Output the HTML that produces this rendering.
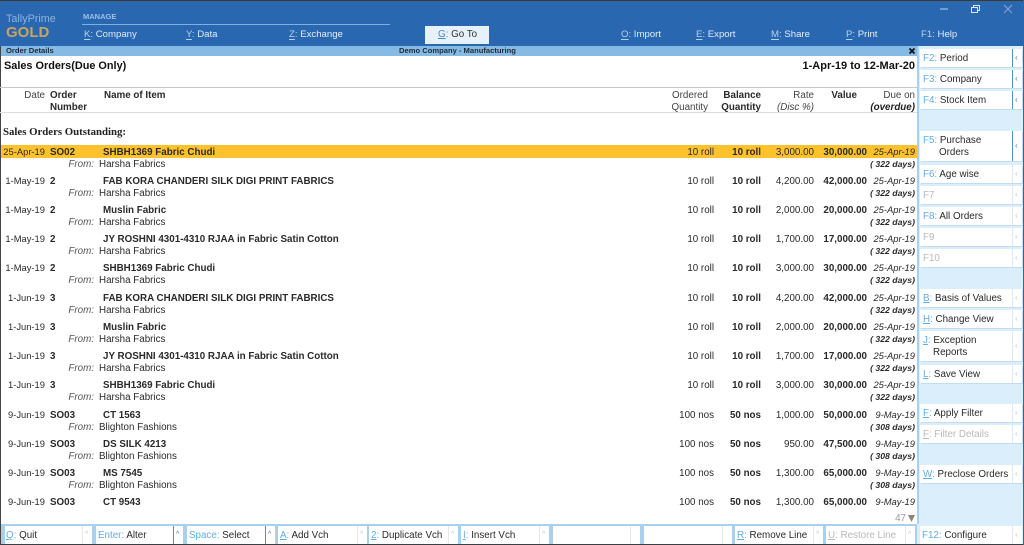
<!DOCTYPE html>
<html><head><meta charset="utf-8">
<style>
html,body{margin:0;padding:0}
body{width:1024px;height:545px;overflow:hidden;position:relative;background:#fff;font-family:"Liberation Sans",sans-serif;font-size:9.8px;color:#2a2a2a;filter:blur(.3px)}
.a,.a2{position:absolute}
.t{position:absolute;white-space:nowrap;line-height:12px}
.w{color:#e2edf8;font-size:9.6px}
.w i{font-style:normal;color:#b5d2ee}
.w u{text-decoration-thickness:1px;text-underline-offset:2px}
b{font-weight:bold}
.r{position:absolute;left:0;width:1024px;height:12px}
.r span{position:absolute;top:1px;white-space:nowrap;line-height:12px}
.d{right:979px;font-size:9.4px}.o{left:50px;font-weight:bold}.n{left:103px;font-weight:bold}
.r .d,.r .du{top:0}
.q{right:310px}.bq{right:263px;font-weight:bold}.rt{right:210px}.v{right:157px;font-weight:bold}.du{right:109px;font-style:italic;font-size:9.4px}
.f{right:930px;font-style:italic;color:#555}.s{left:99px}.ov{right:109px;font-weight:bold;font-style:italic;font-size:8.7px}
.r .ov{top:0}
.btn{position:absolute;background:#fff;box-shadow:1px 1px 0 #c3dcf0;height:18px;left:920px;width:102px}
.btn .l{position:absolute;left:3px;top:4px;line-height:12px;white-space:nowrap}
.btn .c{color:#62ace4}
.btn .g{color:#b9b9b9}
.btn .dv{position:absolute;left:92px;top:0;bottom:0;width:1px;background:#dfe8f0}
.btn.on .dv{background:#4f8ed0}
.btn .ar{position:absolute;left:95px;top:50%;margin-top:-6px;line-height:12px;font-size:8px;color:#c4c4c4}
.btn.on .ar{color:#3c78bd}
.bt{position:absolute;top:526px;height:18px;background:#fff}
.bt .l{position:absolute;left:2px;top:4px;line-height:12px;white-space:nowrap}
.bt .c{color:#62ace4;font-weight:normal}
.bt .g{color:#b9b9b9}
.bt .dv{position:absolute;top:0;bottom:0;width:1px;background:#e4e9ee}
.bt.on .dv{background:#4f8ed0}
.bt .ar{position:absolute;top:3px;font-size:7px;line-height:12px;color:#c4c4c4}
.bt.on .ar{color:#3c78bd}
</style></head><body>
<div class="a" style="left:0;top:0;width:1024px;height:46px;background:#2a67b1"></div>
<div class="a" style="left:0;top:0;width:1024px;height:1px;background:#3d3a30"></div>
<div class="t" style="left:6px;top:12px;font-size:10.8px;color:#8cb3dc;line-height:14px">TallyPrime</div>
<div class="t" style="left:6px;top:24px;font-size:15px;font-weight:bold;color:#c9a55c;line-height:18px">GOLD</div>
<div class="t" style="left:83px;top:11px;font-size:7.5px;font-weight:bold;color:#9cc0e6">MANAGE</div>
<div class="a" style="left:82px;top:24px;width:308px;height:1px;background:#7fb0e0"></div>
<div class="t w" style="left:84px;top:29px"><i><u>K</u>:</i> Company</div>
<div class="t w" style="left:186px;top:29px"><i><u>Y</u>:</i> Data</div>
<div class="t w" style="left:289px;top:29px"><i><u>Z</u>:</i> Exchange</div>
<div class="a" style="left:425px;top:26px;width:64px;height:18px;background:#e6f1fa"></div>
<div class="t" style="left:438px;top:29px;color:#333"><span style="color:#4a86c6"><u>G</u>:</span> Go To</div>
<div class="t w" style="left:621px;top:29px"><i><u>O</u>:</i> Import</div>
<div class="t w" style="left:696px;top:29px"><i><u>E</u>:</i> Export</div>
<div class="t w" style="left:771px;top:29px"><i><u>M</u>:</i> Share</div>
<div class="t w" style="left:846px;top:29px"><i><u>P</u>:</i> Print</div>
<div class="t w" style="left:921px;top:29px"><i>F1:</i> Help</div>
<svg class="a" style="left:930px;top:0" width="94" height="20" viewBox="0 0 94 20"><path d="M10 9h8" stroke="#b8cfe8" stroke-width="1"/><path d="M41.500 7.500h6v5h-6zM43.500 7.500v-2h6v5h-2" stroke="#dbe8f5" fill="none"/><path d="M74 5l8 8M82 5l-8 8" stroke="#86aad6" fill="none"/></svg>

<div class="a" style="left:0;top:46px;width:917px;height:10px;background:#85bae4"></div>
<div class="t" style="left:6px;top:45px;font-size:7.6px;font-weight:bold;color:#1e2a38">Order Details</div>
<div class="t" style="left:399px;top:45px;font-size:7.6px;font-weight:bold;color:#1e2a38">Demo Company - Manufacturing</div>
<svg class="a" style="left:908px;top:47px" width="8" height="8"><path d="M1.500 1.500l5 5M6.500 1.500l-5 5" stroke="#111" stroke-width="1.800"/></svg>
<div class="a" style="left:0;top:46px;width:1px;height:478px;background:#444"></div>

<div class="t" style="left:4px;top:60px;font-size:10.9px;font-weight:bold;color:#111">Sales Orders(Due Only)</div>
<div class="t" style="right:109px;top:60px;font-size:11px;font-weight:bold;color:#111">1-Apr-19 to 12-Mar-20</div>
<div class="a" style="left:0;top:87px;width:917px;height:1px;background:#c8c8c8"></div>
<div class="t" style="right:979px;top:90px;color:#444">Date</div>
<div class="t" style="left:50px;top:90px;font-weight:bold;line-height:12px">Order<br>Number</div>
<div class="t" style="left:104px;top:90px;font-weight:bold">Name of Item</div>
<div class="t" style="right:316px;top:90px;text-align:right;color:#444">Ordered<br>Quantity</div>
<div class="t" style="right:263px;top:90px;text-align:right;font-weight:bold">Balance<br>Quantity</div>
<div class="t" style="right:210px;top:90px;text-align:right;color:#444">Rate<br><em>(Disc %)</em></div>
<div class="t" style="right:167px;top:90px;font-weight:bold">Value</div>
<div class="t" style="right:109px;top:90px;text-align:right;color:#444">Due on<br><b style="font-style:italic;color:#222">(overdue)</b></div>
<div class="a" style="left:0;top:112px;width:917px;height:1px;background:#ddd"></div>
<div class="t" style="left:3px;top:126px;font-family:'Liberation Serif',serif;font-size:10.8px;font-weight:bold;color:#222">Sales Orders Outstanding:</div>
<div class="a" style="left:1px;top:145px;width:916px;height:13px;background:#fec22d"></div>

<div class="r" style="top:146px"><span class="d">25-Apr-19</span><span class="o">SO02</span><span class="n">SHBH1369 Fabric Chudi</span><span class="q">10 roll</span><span class="bq">10 roll</span><span class="rt">3,000.00</span><span class="v">30,000.00</span><span class="du">25-Apr-19</span></div>
<div class="r" style="top:158px"><span class="f">From:</span><span class="s">Harsha Fabrics</span><span class="ov">( 322 days)</span></div>

<div class="r" style="top:175px"><span class="d">1-May-19</span><span class="o">2</span><span class="n">FAB KORA CHANDERI SILK DIGI PRINT FABRICS</span><span class="q">10 roll</span><span class="bq">10 roll</span><span class="rt">4,200.00</span><span class="v">42,000.00</span><span class="du">25-Apr-19</span></div>
<div class="r" style="top:187px"><span class="f">From:</span><span class="s">Harsha Fabrics</span><span class="ov">( 322 days)</span></div>

<div class="r" style="top:204px"><span class="d">1-May-19</span><span class="o">2</span><span class="n">Muslin Fabric</span><span class="q">10 roll</span><span class="bq">10 roll</span><span class="rt">2,000.00</span><span class="v">20,000.00</span><span class="du">25-Apr-19</span></div>
<div class="r" style="top:216px"><span class="f">From:</span><span class="s">Harsha Fabrics</span><span class="ov">( 322 days)</span></div>

<div class="r" style="top:233px"><span class="d">1-May-19</span><span class="o">2</span><span class="n">JY ROSHNI 4301-4310 RJAA in Fabric Satin Cotton</span><span class="q">10 roll</span><span class="bq">10 roll</span><span class="rt">1,700.00</span><span class="v">17,000.00</span><span class="du">25-Apr-19</span></div>
<div class="r" style="top:245px"><span class="f">From:</span><span class="s">Harsha Fabrics</span><span class="ov">( 322 days)</span></div>

<div class="r" style="top:262px"><span class="d">1-May-19</span><span class="o">2</span><span class="n">SHBH1369 Fabric Chudi</span><span class="q">10 roll</span><span class="bq">10 roll</span><span class="rt">3,000.00</span><span class="v">30,000.00</span><span class="du">25-Apr-19</span></div>
<div class="r" style="top:274px"><span class="f">From:</span><span class="s">Harsha Fabrics</span><span class="ov">( 322 days)</span></div>

<div class="r" style="top:292px"><span class="d">1-Jun-19</span><span class="o">3</span><span class="n">FAB KORA CHANDERI SILK DIGI PRINT FABRICS</span><span class="q">10 roll</span><span class="bq">10 roll</span><span class="rt">4,200.00</span><span class="v">42,000.00</span><span class="du">25-Apr-19</span></div>
<div class="r" style="top:304px"><span class="f">From:</span><span class="s">Harsha Fabrics</span><span class="ov">( 322 days)</span></div>

<div class="r" style="top:321px"><span class="d">1-Jun-19</span><span class="o">3</span><span class="n">Muslin Fabric</span><span class="q">10 roll</span><span class="bq">10 roll</span><span class="rt">2,000.00</span><span class="v">20,000.00</span><span class="du">25-Apr-19</span></div>
<div class="r" style="top:333px"><span class="f">From:</span><span class="s">Harsha Fabrics</span><span class="ov">( 322 days)</span></div>

<div class="r" style="top:350px"><span class="d">1-Jun-19</span><span class="o">3</span><span class="n">JY ROSHNI 4301-4310 RJAA in Fabric Satin Cotton</span><span class="q">10 roll</span><span class="bq">10 roll</span><span class="rt">1,700.00</span><span class="v">17,000.00</span><span class="du">25-Apr-19</span></div>
<div class="r" style="top:362px"><span class="f">From:</span><span class="s">Harsha Fabrics</span><span class="ov">( 322 days)</span></div>

<div class="r" style="top:379px"><span class="d">1-Jun-19</span><span class="o">3</span><span class="n">SHBH1369 Fabric Chudi</span><span class="q">10 roll</span><span class="bq">10 roll</span><span class="rt">3,000.00</span><span class="v">30,000.00</span><span class="du">25-Apr-19</span></div>
<div class="r" style="top:391px"><span class="f">From:</span><span class="s">Harsha Fabrics</span><span class="ov">( 322 days)</span></div>

<div class="r" style="top:409px"><span class="d">9-Jun-19</span><span class="o">SO03</span><span class="n">CT 1563</span><span class="q">100 nos</span><span class="bq">50 nos</span><span class="rt">1,000.00</span><span class="v">50,000.00</span><span class="du">9-May-19</span></div>
<div class="r" style="top:421px"><span class="f">From:</span><span class="s">Blighton Fashions</span><span class="ov">( 308 days)</span></div>

<div class="r" style="top:438px"><span class="d">9-Jun-19</span><span class="o">SO03</span><span class="n">DS SILK 4213</span><span class="q">100 nos</span><span class="bq">50 nos</span><span class="rt">950.00</span><span class="v">47,500.00</span><span class="du">9-May-19</span></div>
<div class="r" style="top:450px"><span class="f">From:</span><span class="s">Blighton Fashions</span><span class="ov">( 308 days)</span></div>

<div class="r" style="top:467px"><span class="d">9-Jun-19</span><span class="o">SO03</span><span class="n">MS 7545</span><span class="q">100 nos</span><span class="bq">50 nos</span><span class="rt">1,300.00</span><span class="v">65,000.00</span><span class="du">9-May-19</span></div>
<div class="r" style="top:479px"><span class="f">From:</span><span class="s">Blighton Fashions</span><span class="ov">( 308 days)</span></div>

<div class="r" style="top:496px"><span class="d">9-Jun-19</span><span class="o">SO03</span><span class="n">CT 9543</span><span class="q">100 nos</span><span class="bq">50 nos</span><span class="rt">1,300.00</span><span class="v">65,000.00</span><span class="du">9-May-19</span></div>
<div class="t" style="right:118px;top:513px;color:#9a9a9a">47</div>
<svg class="a" style="left:908px;top:515px" width="8" height="7"><path d="M0 0h7l-3.500 7z" fill="#8c8578"/></svg>

<!-- sidebar -->
<div class="a" style="left:917px;top:46px;width:107px;height:499px;background:#dbeefb"></div>
<div class="a" style="left:917px;top:46px;width:2px;height:479px;background:#a9d0ee"></div>
<div class="a" style="left:0;top:524px;width:1024px;height:21px;background:#a9d0ee"></div>
<div class="a" style="left:917px;top:524px;width:107px;height:21px;background:#dbeefb"></div>

<div class="btn on" style="top:49px"><span class="l"><span class="c">F2:</span> Period</span><span class="dv"></span><span class="ar">‹</span></div>
<div class="btn on" style="top:70px"><span class="l"><span class="c">F3:</span> Company</span><span class="dv"></span><span class="ar">‹</span></div>
<div class="btn on" style="top:91px"><span class="l"><span class="c">F4:</span> Stock Item</span><span class="dv"></span><span class="ar">‹</span></div>
<div class="btn on" style="top:131px;height:30px"><span class="l"><span class="c">F5:</span> Purchase<br><span style="padding-left:16px">Orders</span></span><span class="dv"></span><span class="ar">‹</span></div>
<div class="btn" style="top:165px"><span class="l"><span class="c">F6:</span> Age wise</span><span class="dv"></span><span class="ar">‹</span></div>
<div class="btn" style="top:186px"><span class="l g">F7</span><span class="dv"></span><span class="ar">‹</span></div>
<div class="btn" style="top:207px"><span class="l"><span class="c">F8:</span> All Orders</span><span class="dv"></span><span class="ar">‹</span></div>
<div class="btn" style="top:228px"><span class="l g">F9</span><span class="dv"></span><span class="ar">‹</span></div>
<div class="btn" style="top:249px"><span class="l g">F10</span><span class="dv"></span><span class="ar">‹</span></div>
<div class="btn" style="top:289px"><span class="l"><span class="c"><u>B</u>:</span> Basis of Values</span><span class="dv"></span><span class="ar">‹</span></div>
<div class="btn" style="top:310px"><span class="l"><span class="c"><u>H</u>:</span> Change View</span><span class="dv"></span><span class="ar">‹</span></div>
<div class="btn" style="top:331px;height:30px"><span class="l"><span class="c"><u>J</u>:</span> Exception<br><span style="padding-left:10px">Reports</span></span><span class="dv"></span><span class="ar">‹</span></div>
<div class="btn" style="top:365px"><span class="l"><span class="c"><u>L</u>:</span> Save View</span><span class="dv"></span><span class="ar">‹</span></div>
<div class="btn" style="top:404px"><span class="l"><span class="c"><u>F</u>:</span> Apply Filter</span><span class="dv"></span><span class="ar">‹</span></div>
<div class="btn" style="top:425px"><span class="l g"><u>F</u>: Filter Details</span><span class="dv"></span><span class="ar">‹</span></div>
<div class="btn" style="top:465px"><span class="l"><span class="c"><u>W</u>:</span> Preclose Orders</span><span class="dv"></span><span class="ar">‹</span></div>

<!-- bottom -->
<div class="bt" style="left:5px;width:87px"><span class="l" style="left:1px"><span class="c"><u>Q</u>:</span> Quit</span><span class="dv" style="left:77px"></span><span class="ar" style="left:80px">^</span></div>
<div class="bt on" style="left:96px;width:87px"><span class="l"><span class="c">Enter:</span> Alter</span><span class="dv" style="left:77px"></span><span class="ar" style="left:80px">^</span></div>
<div class="bt on" style="left:187px;width:88px"><span class="l"><span class="c">Space:</span> Select</span><span class="dv" style="left:78px"></span><span class="ar" style="left:81px">^</span></div>
<div class="bt" style="left:278px;width:89px"><span class="l"><span class="c"><u>A</u>:</span> Add Vch</span><span class="dv" style="left:79px"></span><span class="ar" style="left:82px">^</span></div>
<div class="bt" style="left:369px;width:89px"><span class="l"><span class="c"><u>2</u>:</span> Duplicate Vch</span><span class="dv" style="left:79px"></span><span class="ar" style="left:82px">^</span></div>
<div class="bt" style="left:461px;width:88px"><span class="l"><span class="c"><u>I</u>:</span> Insert Vch</span><span class="dv" style="left:78px"></span><span class="ar" style="left:81px">^</span></div>
<div class="bt" style="left:553px;width:87px"><span class="dv" style="left:77px"></span></div>
<div class="bt" style="left:644px;width:88px"><span class="dv" style="left:78px"></span></div>
<div class="bt" style="left:735px;width:88px"><span class="l"><span class="c"><u>R</u>:</span> Remove Line</span><span class="dv" style="left:78px"></span><span class="ar" style="left:81px">^</span></div>
<div class="bt" style="left:826px;width:89px"><span class="l g"><u>U</u>: Restore Line</span><span class="dv" style="left:79px"></span><span class="ar" style="left:82px">^</span></div>
<div class="bt" style="left:920px;width:102px"><span class="l"><span class="c">F12:</span> Configure</span><span class="dv" style="left:92px"></span><span class="ar" style="left:95px;font-size:8px">‹</span></div>
<div class="a" style="left:0;top:544px;width:1024px;height:1px;background:#3a3f45"></div>
<div class="a" style="left:0;top:524px;width:1px;height:21px;background:#444"></div>
<div class="a" style="left:1023px;top:0;width:1px;height:545px;background:#2a67b1"></div>
</body></html>
